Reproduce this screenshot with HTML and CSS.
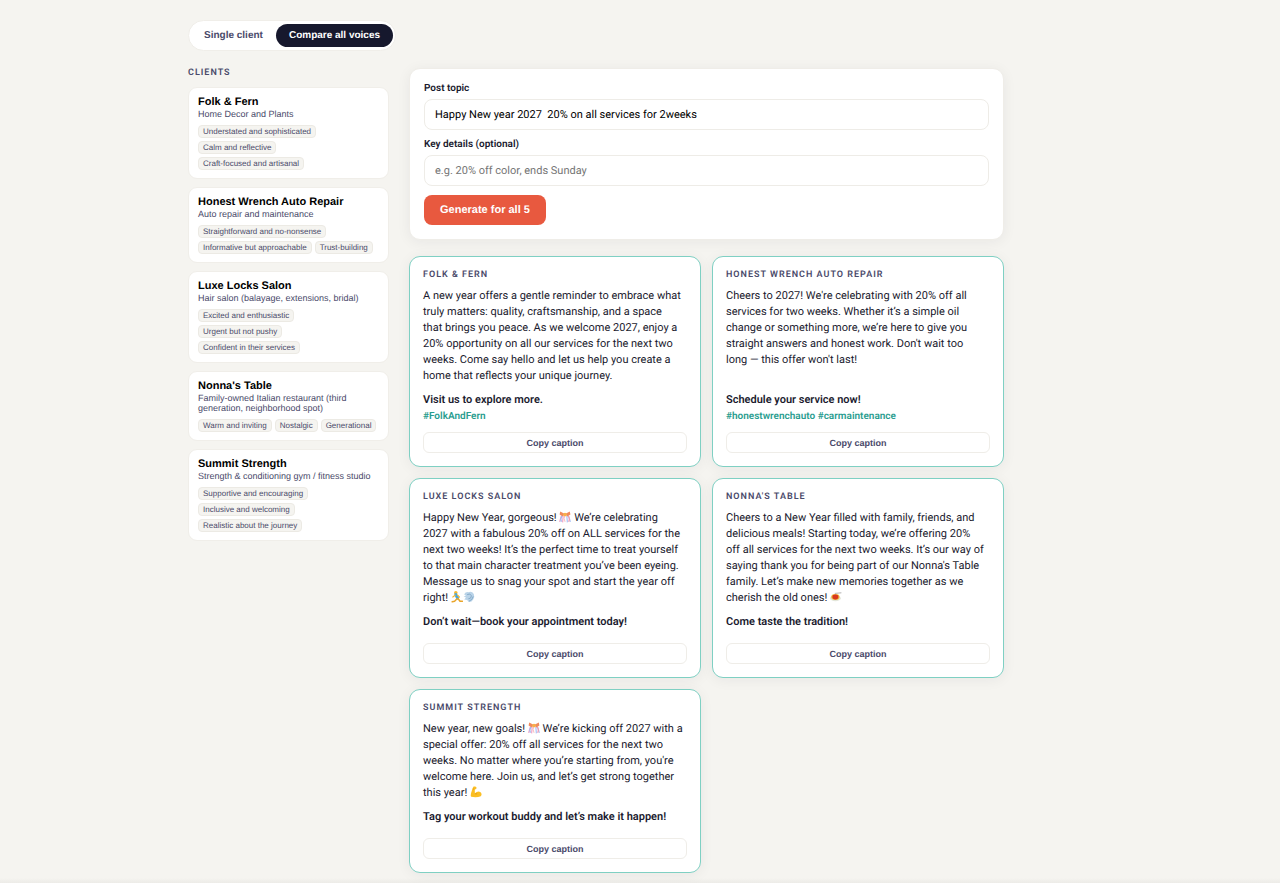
FILE: index.html
```html
<!DOCTYPE html>
<html lang="en">
<head>
    <meta charset="UTF-8">
    <meta name="viewport" content="width=device-width, initial-scale=1.0">
    <title>Compare all voices</title>
    <link rel="stylesheet" href="styles.css">
</head>
<body>
    <!-- shared emoji drawings -->
    <svg class="defs" aria-hidden="true">
        <symbol id="confetti" viewBox="0 0 20 20">
            <path d="M4 8 L1 18 M7 8 L6 19" stroke="#f3a6c8" stroke-width="2" fill="none"/>
            <path d="M5 8 Q2 12 4 18" stroke="#9db8f2" stroke-width="2" fill="none"/>
            <path d="M13 8 L14 19 M16 8 L19 18" stroke="#a9c3f7" stroke-width="2" fill="none"/>
            <path d="M10 7 Q7 12 10 18" stroke="#f6b5b5" stroke-width="1.5" fill="none"/>
            <path d="M15 8 Q19 12 16 18" stroke="#f29ab0" stroke-width="2" fill="none"/>
            <path d="M10 5 L2 1 L1 6 L6 9 Z M10 5 L18 1 L19 6 L14 9 Z" fill="#f08a5d"/>
            <circle cx="10" cy="6" r="3" fill="#f6b04a"/>
        </symbol>
        <symbol id="runner" viewBox="0 0 20 20">
            <circle cx="8" cy="3" r="3" fill="#f5b731"/>
            <path d="M8 6 L11 12" stroke="#45a5dc" stroke-width="5" fill="none" stroke-linecap="round"/>
            <path d="M7 7 L3 10 M11 7 L14 10" stroke="#f5b731" stroke-width="2" fill="none" stroke-linecap="round"/>
            <path d="M10 13 L6 17 L2 18 M12 13 L15 17 L19 17" stroke="#e9a52a" stroke-width="2.5" fill="none" stroke-linecap="round" stroke-linejoin="round"/>
        </symbol>
        <symbol id="dash" viewBox="0 0 20 20">
            <path d="M2 6 Q3 1 9 2 Q15 0 18 5 Q20 10 17 14 Q14 19 9 18 L7 15 L2 14 L5 11 L1 9 L5 8 Z" fill="#b9d3e8"/>
            <path d="M7 6 Q12 3 14 8 Q14 13 9 13 M10 17 Q16 15 17 9" stroke="#7fa6c6" stroke-width="1.5" fill="none"/>
        </symbol>
        <symbol id="pasta" viewBox="0 0 20 20">
            <ellipse cx="9" cy="12" rx="9" ry="5" fill="#e3e6da"/>
            <ellipse cx="9" cy="10" rx="7" ry="5" fill="#f0b83d"/>
            <ellipse cx="9" cy="10" rx="5" ry="4" fill="#d8381e"/>
            <path d="M8 4 L19 3" stroke="#a9a9a9" stroke-width="1.5"/>
        </symbol>
        <symbol id="muscle" viewBox="0 0 20 20">
            <path d="M6 1 Q10 0 11 3 Q11 6 8 6 L8 12 Q13 8 17 10 Q21 13 18 17 Q11 20 2 18 Q0 16 3 8 Q4 3 6 1 Z" fill="#fbbf24"/>
            <path d="M8 12 Q9 14 12 13 M7 5 L5 5" stroke="#dd8f12" stroke-width="1.2" fill="none"/>
        </symbol>
    </svg>

    <div class="container">
        <div class="toggle">
            <button type="button">Single client</button>
            <button type="button" class="active">Compare all voices</button>
        </div>

        <div class="layout">
            <aside>
                <h2>Clients</h2>
                <div class="client">
                    <h3>Folk &amp; Fern</h3>
                    <p>Home Decor and Plants</p>
                    <div class="tags"><span>Understated and sophisticated</span><span>Calm and reflective</span><span>Craft-focused and artisanal</span></div>
                </div>
                <div class="client">
                    <h3>Honest Wrench Auto Repair</h3>
                    <p>Auto repair and maintenance</p>
                    <div class="tags"><span>Straightforward and no-nonsense</span><span>Informative but approachable</span><span>Trust-building</span></div>
                </div>
                <div class="client">
                    <h3>Luxe Locks Salon</h3>
                    <p>Hair salon (balayage, extensions, bridal)</p>
                    <div class="tags"><span>Excited and enthusiastic</span><span>Urgent but not pushy</span><span>Confident in their services</span></div>
                </div>
                <div class="client">
                    <h3>Nonna's Table</h3>
                    <p>Family-owned Italian restaurant (third generation, neighborhood spot)</p>
                    <div class="tags"><span>Warm and inviting</span><span>Nostalgic</span><span>Generational</span></div>
                </div>
                <div class="client">
                    <h3>Summit Strength</h3>
                    <p>Strength &amp; conditioning gym / fitness studio</p>
                    <div class="tags"><span>Supportive and encouraging</span><span>Inclusive and welcoming</span><span>Realistic about the journey</span></div>
                </div>
            </aside>

            <main>
                <form class="post-form">
                    <label for="topic">Post topic</label>
                    <input type="text" id="topic" name="topic" value="Happy New year 2027  20% on all services for 2weeks">
                    <label for="details">Key details (optional)</label>
                    <input type="text" id="details" name="details" placeholder="e.g. 20% off color, ends Sunday">
                    <button type="button" class="generate">Generate for all 5</button>
                </form>

                <div class="results">
                    <article class="result">
                        <h3>Folk &amp; Fern</h3>
                        <p class="caption">A new year offers a gentle reminder to embrace what truly matters: quality, craftsmanship, and a space that&nbsp;brings you peace. As we welcome 2027, enjoy a 20% opportunity on all our services for the next two weeks. Come say hello and let us help you create a home that reflects your unique journey.</p>
                        <p class="cta">Visit us to explore more.</p>
                        <p class="hashtags">#FolkAndFern</p>
                        <button type="button" class="copy">Copy caption</button>
                    </article>
                    <article class="result">
                        <h3>Honest Wrench Auto Repair</h3>
                        <p class="caption">Cheers to 2027! We're celebrating with 20% off all services for two weeks. Whether it’s a simple oil change or something more, we’re here to give you straight answers and honest work. Don't wait too long&nbsp;— this offer won't last!</p>
                        <p class="cta">Schedule your service now!</p>
                        <p class="hashtags">#honestwrenchauto #carmaintenance</p>
                        <button type="button" class="copy">Copy caption</button>
                    </article>
                    <article class="result">
                        <h3>Luxe Locks Salon</h3>
                        <p class="caption">Happy New Year, gorgeous! <svg class="emoji"><use href="#confetti"/></svg> We’re celebrating 2027&nbsp;with a fabulous 20% off on ALL services for the next two weeks! It’s the perfect time to treat yourself to that main character treatment you’ve been eyeing. Message us to snag your spot and start the year off right! <svg class="emoji"><use href="#runner"/></svg><svg class="emoji"><use href="#dash"/></svg></p>
                        <p class="cta">Don’t wait—book your appointment today!</p>
                        <p class="hashtags"></p>
                        <button type="button" class="copy">Copy caption</button>
                    </article>
                    <article class="result">
                        <h3>Nonna's Table</h3>
                        <p class="caption">Cheers to a New Year filled with family, friends, and delicious meals! Starting today, we’re offering 20% off&nbsp;all services for the next two weeks. It’s our way of saying thank you for being part of our Nonna's Table family. Let’s make new memories together as we cherish the old ones! <svg class="emoji"><use href="#pasta"/></svg></p>
                        <p class="cta">Come taste the tradition!</p>
                        <p class="hashtags"></p>
                        <button type="button" class="copy">Copy caption</button>
                    </article>
                    <article class="result">
                        <h3>Summit Strength</h3>
                        <p class="caption">New year, new goals! <svg class="emoji"><use href="#confetti"/></svg> We’re kicking off 2027 with a special offer: 20% off all services for the next two weeks. No matter where you’re starting from, you're welcome here. Join us, and let’s get strong together this year! <svg class="emoji"><use href="#muscle"/></svg></p>
                        <p class="cta">Tag your workout buddy and let’s make it happen!</p>
                        <p class="hashtags"></p>
                        <button type="button" class="copy">Copy caption</button>
                    </article>
                </div>
            </main>
        </div>
    </div>
    <div class="page-end"></div>
</body>
</html>
```
FILE: styles.css
```css
* {
    box-sizing: border-box;
}
body {
    margin: 0;
    background-color: #f5f4f0;
    color: #1a1a2e;
    font-family: Roboto, "Liberation Sans", sans-serif;
    font-size: 11px;
    text-rendering: geometricPrecision;
}
h2, h3, p {
    margin: 0;
}
button, input {
    text-rendering: inherit;
}
input {
    font-family: inherit;
}
button {
    font-family: "Liberation Sans", Arial, sans-serif;
    cursor: pointer;
}
.defs {
    display: none;
}
.container {
    max-width: 904px;
    margin: 0 auto;
    padding-top: 20px;
}
.toggle {
    display: flex;
    width: fit-content;
    padding: 3px 2px;
    background: #fff;
    border: 1px solid #f0eee9;
    border-radius: 20px;
}
.toggle button {
    padding: 0 13px;
    height: 23px;
    border: none;
    border-radius: 20px;
    background: none;
    color: #4a4a6a;
    font-size: 10px;
    font-weight: 600;
}
.toggle button.active {
    background: #16182d;
    color: #fff;
}
.layout {
    display: grid;
    grid-template-columns: 201px minmax(0, 595px);
    gap: 20px;
    align-items: start;
    margin-top: 17px;
}

/* sidebar */
aside {
    display: flex;
    flex-direction: column;
    gap: 8px;
}
aside h2 {
    color: #4a4a6a;
    font-size: 9px;
    font-weight: 600;
    line-height: 11px;
    letter-spacing: 1px;
    text-transform: uppercase;
}
.client {
    padding: 8px 9px;
    background: #fff;
    border: 1px solid #f0eee9;
    border-radius: 9px;
    font-family: "Liberation Sans", Arial, sans-serif;
}
.client h3 {
    color: #000;
    font-size: 11px;
    line-height: 13px;
}
.client p {
    color: #4a4a6a;
    font-size: 9px;
    line-height: 10px;
}
.tags {
    display: flex;
    flex-wrap: wrap;
    gap: 3px;
    margin-top: 6px;
}
.tags span {
    padding: 0 4px;
    background: #f5f4f0;
    border: 1px solid #eceae4;
    border-radius: 4px;
    color: #4a4a6a;
    font-size: 8px;
    line-height: 11px;
}

/* form */
.post-form {
    padding: 14px;
    background: #fff;
    border: 1px solid #efede8;
    border-radius: 11px;
    box-shadow: 0 2px 14px rgba(26, 26, 46, 0.06);
}
.post-form label {
    display: block;
    margin-bottom: 4px;
    font-size: 10px;
    font-weight: 600;
    line-height: 12px;
}
.post-form input {
    display: block;
    width: 100%;
    height: 31px;
    margin-bottom: 9px;
    padding: 0 10px;
    background: #fff;
    border: 1px solid #eeece7;
    border-radius: 8px;
    color: #000;
    font-size: 11px;
}
.post-form input::placeholder {
    color: #757575;
}
.generate {
    display: block;
    height: 30px;
    padding: 0 16px;
    border: none;
    border-radius: 8px;
    background: #e8593f;
    color: #fff;
    font-size: 11px;
    font-weight: 600;
}

/* results */
.results {
    display: grid;
    grid-template-columns: 1fr 1fr;
    gap: 11px;
    margin-top: 16px;
}
.result {
    display: flex;
    flex-direction: column;
    padding: 13px;
    background: #fff;
    border: 1px solid #7fd0c3;
    border-radius: 11px;
    box-shadow: 0 2px 14px rgba(26, 26, 46, 0.06);
}
.result h3 {
    color: #4a4a6a;
    font-size: 9px;
    font-weight: 600;
    line-height: 11px;
    letter-spacing: 1px;
    text-transform: uppercase;
}
.caption {
    flex: 1;
    margin-top: 7px;
    line-height: 16px;
}
.emoji {
    width: 12px;
    height: 12px;
    vertical-align: -2px;
}
.cta {
    margin-top: 9px;
    font-weight: 600;
    line-height: 13px;
}
.hashtags {
    margin: 5px 0 10px;
    color: #2a9d8f;
    font-size: 10px;
    font-weight: 600;
    line-height: 11px;
}
.copy {
    height: 21px;
    background: #fff;
    border: 1px solid #efede8;
    border-radius: 6px;
    color: #4a4a6a;
    font-size: 9px;
    font-weight: 600;
}
.page-end {
    height: 6px;
    margin-top: 5px;
    background: linear-gradient(#f5f4f0, #ebeae6);
}
```
